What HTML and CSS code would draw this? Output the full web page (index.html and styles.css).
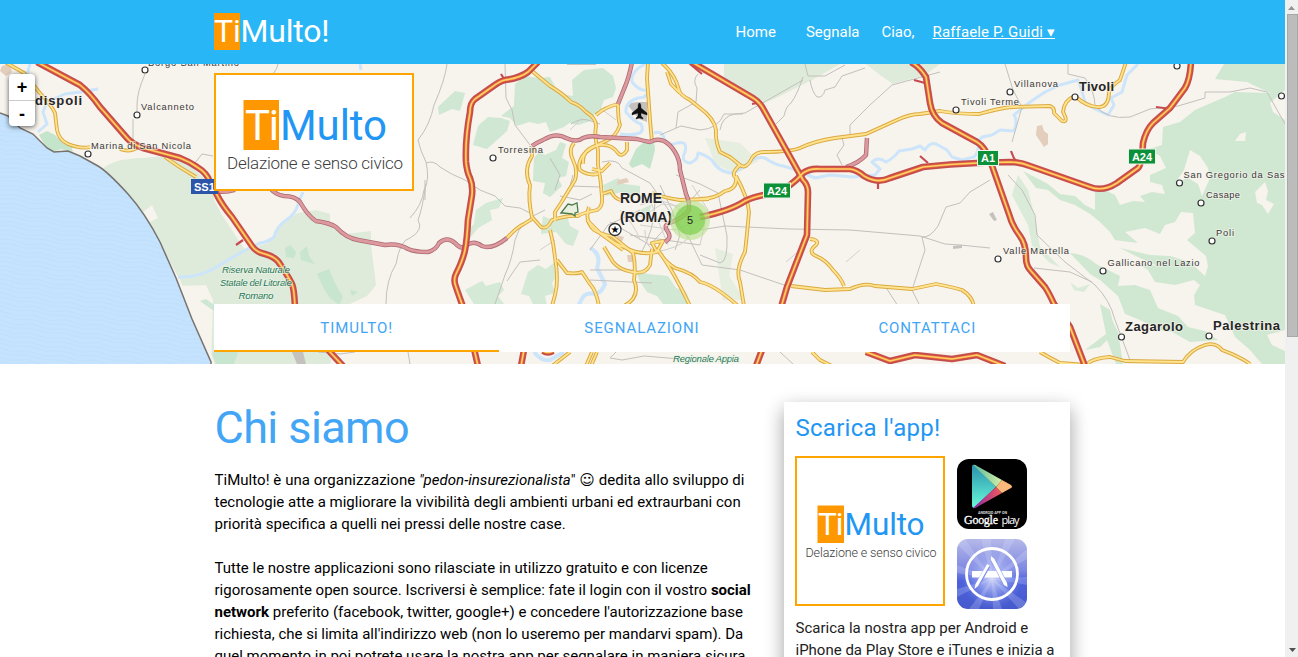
FILE: index.html
```html
<!DOCTYPE html>
<html lang="it">
<head>
<meta charset="utf-8">
<title>TiMulto!</title>
<link rel="stylesheet" href="styles.css">
</head>
<body>
<div class="page">
  <header class="topbar">
    <div class="container topbar-row">
      <a class="brand"><span class="brand-mark">Ti</span>Multo!</a>
      <nav class="menu">
        <a class="menu-home">Home</a><a class="menu-report">Segnala</a><span class="menu-hello">Ciao,</span><a class="user">Raffaele P. Guidi ▾</a>
      </nav>
    </div>
  </header>

  <section class="hero">
    <svg class="map" viewBox="0 64 1285 300" width="1285" height="300">
      <defs>
        <pattern id="waves" width="34" height="9" patternUnits="userSpaceOnUse" patternTransform="rotate(8)">
          <path d="M0 3q8-3 17 0t17 0M0 7q8-2 17 0t17 0" fill="none" stroke="#bbdcf8" stroke-width="1" opacity=".7"/>
        </pattern>
        <g id="motorways">
          <path d="M37 62L80 85Q90 93 100 107L127 138Q132 144 143 148L180 158Q190 162 197 167Q207 173 210 182L217 195Q222 205 232 217L252 246Q256 252 265 254Q276 257 280 264Q288 276 292 284Q294 288 295 306V310L330 352L343 366"/>
          <path d="M538 62L528 72Q520 78 505 80Q500 81 492 87L475 99Q470 103 470 112Q465 140 466 162Q467 172 470 178Q473 185 472 195L468 220Q467 240 465 250Q463 260 456 274Q453 280 456 287Q458 293 462 304L472 340L478 366"/>
          <path d="M690 61L753 98Q760 102 765 112L803 180Q808 185 808 192L807 235L787 287L782 304L762 350L756 366"/>
          <path d="M700 217Q730 211 745 201Q755 196 775 193Q790 188 803 173Q810 168 820 169L850 169Q857 170 864 176Q877 184 890 178L923 167Q950 164 977 163L1010 162Q1020 162 1030 166L1090 187Q1103 192 1117 183L1138 168Q1142 164 1143 143Q1146 130 1153 123L1170 108L1185 88Q1190 80 1191 62"/>
          <path d="M911 62Q920 67 926 77L930 103Q932 116 942 123L977 142Q985 147 990 160L1010 217Q1012 225 1020 236Q1026 244 1026 258Q1026 266 1031 271L1045 287Q1049 293 1054 304L1070 327L1085 366"/>
          <path d="M524 350L521 366M543 351Q548 354 553 351M866 352L890 361L915 355L952 359L977 355L1005 366"/>
        </g>
        <g id="pinks">
          <path d="M214 191Q224 193 235 190M268 186Q275 195 284 196Q295 196 300 202Q308 216 316 221Q330 223 336 227Q346 238 358 240L385 245Q398 243 408 249Q415 252 428 252Q436 250 439 243Q447 236 455 243Q462 251 467 245Q474 240 482 246Q492 250 507 238"/>
          <path d="M532 146Q536 143 543 140Q556 132 566 138Q577 143 583 138Q590 135 600 137L637 139Q644 141 650 142Q656 138 664 141Q670 144 675 152Q680 160 680 170L686 194Q690 203 689 210Q684 218 667 224Q664 227 668 232Q672 238 665 242"/>
          <path d="M632 62Q629 78 624 89L618 104M867 138L866 155Q859 163 846 167"/>
        </g>
        <g id="yellows">
          <path d="M5 63L22 73Q30 81 40 94Q52 105 55 114L58 150Q59 198 66 205" transform="translate(0 -62) scale(1)" class="none"/>
          <path d="M5 62L24 73L39 92Q52 106 55 113L57 130Q59 140 68 144Q80 149 90 147M120 149Q130 153 138 147M165 157Q180 168 196 177"/>
          <path d="M532 71L550 86Q562 93 571 102Q580 105 586 112Q596 118 596 126Q594 136 598 150V165Q601 180 602 197Q603 207 597 210Q582 213 578 216Q568 215 552 220Q547 230 541 227L532 217Q528 200 530 185Q523 170 532 156L533 147"/>
          <path d="M507 238Q517 227 524 224L532 219M596 115Q605 107 618 104Q618 120 620 125Q616 137 606 141Q590 148 584 154Q577 163 580 170Q588 176 598 174M574 143Q568 150 573 160Q578 170 575 180L561 203L555 212V221"/>
          <path d="M550 230Q554 245 555 258Q559 280 555 295L552 306M557 260L567 273Q578 274 582 272L590 284Q596 290 599 306M589 207Q584 220 594 230Q602 235 612 236L633 253Q636 265 634 280Q641 297 624 306"/>
          <path d="M583 164Q582 150 595 146Q610 142 618 153Q622 158 627 150L627 142M602 194L611 191Q615 200 622 200M652 193Q665 198 680 200L709 199M648 62L647 78L650 120L652 142"/>
          <path d="M662 63Q675 74 679 90Q680 95 690 100L700 108Q714 118 716 130Q715 140 720 152L730 157L740 165Q746 170 752 158Q756 152 764 152Q790 152 800 148Q815 141 835 138L866 134L897 120Q910 114 920 114L940 111Q955 114 979 114Q1000 108 1012 107L1050 106Q1055 108 1054 113L1062 121Q1069 123 1063 112Q1064 100 1075 96Q1088 108 1100 107Q1109 106 1109 92Q1111 86 1120 80L1126 62"/>
          <path d="M740 165Q730 174 736 178Q737 189 725 191Q715 199 700 199M736 176Q748 198 749 212Q747 235 745 252Q735 270 740 282L744 306M810 239Q820 240 816 245Q807 252 816 256Q826 260 833 270Q841 278 844 286M791 286L825 290L850 289Q865 282 875 286L912 289L936 284Q952 287 962 290Q972 296 974 306"/>
          <path d="M602 233Q612 243 624 247Q640 256 657 252L652 243L663 241L658 250Q665 262 675 268Q693 273 700 282Q715 285 738 306M660 253Q674 272 690 306M604 247L613 262Q620 270 632 272Q645 275 650 265L652 249M587 220L601 234L623 250"/>
          <path d="M592 169L602 171L610 163M570 352L552 366M592 352L586 366M597 352L591 366M812 352L820 360L832 366M667 72L671 84L680 93"/>
          <path d="M1040 352Q1050 358 1060 363L1086 365Q1092 358 1110 357L1125 361L1183 362Q1190 350 1205 345Q1216 342 1222 350L1232 354Q1245 360 1250 364"/>
        </g>
        <g id="towns">
          <circle cx="145" cy="70" r="3"/><circle cx="137" cy="115" r="3"/><circle cx="88" cy="154" r="3"/><circle cx="493" cy="158" r="3"/><circle cx="956" cy="110" r="3"/><circle cx="1010" cy="92" r="3"/><circle cx="1075" cy="97" r="3"/><circle cx="1177" cy="66" r="3"/><circle cx="1281.500" cy="96" r="3"/><circle cx="1179.500" cy="183" r="3"/><circle cx="1201" cy="203" r="3"/><circle cx="1212" cy="241" r="3"/><circle cx="1103" cy="271" r="3"/><circle cx="998" cy="259" r="3"/><circle cx="1121.500" cy="337" r="3"/><circle cx="1209" cy="336" r="3"/>
        </g>
      </defs>

      <rect class="land" y="64" width="1285" height="300"/>

      <g class="woods">
        <path d="M98 173Q110 158 145 158Q175 152 196 170L214 190V200L222 215L245 250L268 243L282 222L298 213L316 210L330 214V226L345 234L371 231V245L376 285L367 296L350 304L330 364H215L180 280L150 225L125 195Z"/>
        <path d="M724 64H840L812 80L778 97L762 104L745 92L724 85ZM866 64H940L925 75L893 84L880 75Z"/>
        <path d="M715 248l18 6-4 22 16 24h-22zM705 138l35 5 18 18-22 12-20-8z" opacity=".7"/>
      </g>
      <path class="land" d="M180 286L206 285L213 300L211 364L192 330ZM143 212L152 205L158 218L150 222Z"/>
      <g class="hills">
        <path d="M1224 64H1285V90L1270 103L1273 112L1285 120V330L1267 335L1272 345L1285 351V364H1262L1250 350L1235 337L1225 315L1195 305L1194 295L1200 285L1194 280L1175 285L1155 282L1148 270L1135 262L1158 266L1140 258L1120 248L1150 255L1170 256L1190 262L1205 276L1208 266L1206 256L1187 240L1195 233L1193 213L1181 212L1175 222L1165 225L1160 234L1145 228L1125 232L1138 243L1115 240L1110 232L1100 222L1090 214L1075 205L1060 200L1048 190L1036 188L1023 171L1048 184L1060 194L1075 196L1085 205L1095 210V190L1105 190L1115 195L1120 205L1133 201L1145 202L1140 196L1152 192L1165 194L1162 185L1150 182L1150 175L1166 168L1160 156L1150 150L1142 151L1162 145L1163 127L1180 122L1195 110L1225 97L1235 92L1270 93L1247 82L1215 79Z"/>
        <path d="M1070 253Q1085 254 1096 264L1112 272L1120 276L1118 286L1135 285L1150 290L1158 308L1178 316L1188 327L1205 331L1218 340L1190 342L1172 332L1160 330L1140 320L1125 314L1118 296L1100 280L1090 274ZM1100 304L1110 310L1113 322L1118 332L1123 364H1116L1107 340L1100 347L1085 350L1106 334Z"/>
        <path d="M1018 175L1028 190L1035 218L1040 247L1060 267L1050 263L1032 245L1028 225L1012 195ZM1070 282l8 6 12-4-6 8-10-2z" opacity=".75"/>
        <path class="land" d="M1190 150l10 6 8 12 2 10-8 18-4-12-10-6-12 4 8-12zM1235 141l5-7 6-2-1 9zM1255 192l10-10 3 9-2 9 8 4-6 10-6-9-5-2z"/>
      </g>
      <g class="greens">
        <path d="M515 84l10-8 14 2 11-1 9 17 14 2 12 2 4 8 6 7-4 8-13 4-9-2-5 4-14 5-4-10-8 2-9-2-12 4-7-8-9-2 13-10zM572 80l12-10 19-2 10 8 3 12-3 9-9 3-3 8-7 7-10-7-3 2-8-14z" opacity=".8"/>
        <path d="M455 91l10 2-5 18-8-2-13 6-1-8zM478 126l10-9 13 1 9 3-3 10-10 9-10 9-14-4zM534 158l5-6 6 3 11-5 4-8 6 2-4 14 7 4-3 14-8 2 4 8-12 11-7-4 2-10-12-2z" opacity=".8"/>
        <path d="M636 149l8-7 10-1 1 9-5 19-8-5-10 4-3-4z"/>
        <path d="M476 210l10-7 17-5-4 10-9 2 2 10-14 8-8 10-6-4 10-10zM543 216l10 4 14-4 3 10 9 5-6 15-7-2-10-12-15 2zM528 272l10-7 8 4 10-8 3 12-7 10 3 10-10 3 2 10h-13l-5-10-8-2zM465 290l17-9 4 5 14-4 4 8-6 6 6 8h-30z" opacity=".7"/>
        <path d="M636 270l12 4 20 2 8 12 10 4 5 12h-28l-6-8-10-4-8-12zM603 185l15-7 6 6 16 2v8l-10 3-8-5-16 4zM640 210l12-6-4 12z" opacity=".75"/>
        <path d="M285 248l5-3 6 7-2 6-8-1zM300 252l7-6 2 10 6 8-8-2-6-2zM317 274l12-5 6 14 8 14-4 8-10-8-6-10zM350 290l8 2-6 4zM200 301l6-2 8 6v6zM212 353l12-6 8-2 6 8-4 11h-18z" opacity=".85"/>
        <path d="M39 135l8-4 8 4 8 8 8 2 2 7-12-3-10 4-6-8z"/>
      </g>
      <g class="urban">
        <path d="M627 104l10-2h10v20l-8-3-9-11zM567 63h29v2h-29zM292 352h11l3 12h-9zM989 214l4-2 4 8-3 1zM953 246l9-1v3l-9 1z"/>
        <path class="sand" d="M1037 126l5-1 2 6 4 3v10l-4 3-8-12zM618 180l9-2 2 4-12 3zM2 66l8-2 2 8-6 4-6-5zM627 255h6v7h-5zM616 235l8 2-3 7z"/>
      </g>

      <path class="sea" d="M0 113L8 116L20 128L33 134L47 148L54 152L68 151L80 156L98 166Q108 172 128 194Q145 213 160 242L176 278L192 319L211 362V366H0Z"/>
      <path class="waves" d="M0 113L8 116L20 128L33 134L47 148L54 152L68 151L80 156L98 166Q108 172 128 194Q145 213 160 242L176 278L192 319L211 362V366H0Z"/>
      <path class="shore" d="M0 113L8 116L20 128L33 134L47 148L54 152L68 151L80 156L98 166Q108 172 128 194Q145 213 160 242L176 278L192 319L211 362V366"/>

      <g class="rivers">
        <path d="M30 64L27 75M98 89L80 92L65 94L47 102L43 112L47 124L38 132M360 64L361 70M303 192L298 204Q296 214 285 221Q276 228 274 237Q268 242 260 243Q240 252 220 265Q200 278 178 277"/>
        <path d="M645 64Q630 72 632 82Q640 92 648 90Q648 98 638 98Q625 102 626 112Q634 122 641 124Q644 130 640 133Q630 136 620 134M654 133Q662 130 664 138Q668 147 677 143Q688 140 685 152Q680 162 690 163Q698 160 698 153Q704 154 712 160Q718 172 732 173Q742 170 750 161Q758 156 765 158Q775 165 783 166Q792 168 803 173L815 178L830 175L853 177L875 175L880 169L872 162Q878 156 886 162Q894 158 899 151L912 149L920 146L925 150Q930 142 936 144L947 150L952 157L962 160L974 157Q980 150 978 142L982 137L992 135L1000 130L1014 131Q1018 120 1014 115L1030 102L1045 92L1060 85L1078 80Q1082 90 1085 102L1095 109L1108 115L1114 105L1111 98L1122 92L1127 75L1138 64"/>
        <path d="M590 248Q602 254 597 268L605 284Q602 292 596 294Q586 292 583 297L578 306M534 352Q542 362 550 360L564 352" class="wide"/>
      </g>
      <g class="lanes">
        <path d="M145 74Q137 92 137 105V112M133 119V144M278 64Q276 74 265 80M195 163L202 154L213 156"/>
        <path d="M447 64Q445 80 434 105Q430 125 418 140Q420 150 426 162Q430 180 424 190Q422 205 410 218M426 163Q434 160 440 167Q452 175 465 180L480 190L495 196L505 206L520 208L530 213M505 64L506 98L512 110L515 125L530 145M425 180V200M426 184Q422 210 418 220Q424 230 410 238Q400 240 396 264Q386 280 386 304"/>
        <path d="M550 158L560 175L555 190M571 124Q580 118 588 120L600 124M600 187L570 186L573 175M660 135L681 126L700 130Q718 129 724 114H743M698 74Q692 80 697 88L696 102L678 112L676 128M602 162Q618 158 622 168L650 183L665 205L690 240L702 265L740 270L790 287M676 175L700 184L718 193L727 236Q728 262 720 263L700 255M660 185L672 210L680 235L675 250"/>
        <path d="M700 230L725 226L790 229L850 230L920 236L945 244L960 245L990 248M805 64L808 76L825 76L845 65M803 77Q797 95 791 103Q786 106 784 116L776 124M810 80Q812 92 817 97Q823 98 825 90L835 87L842 76L865 68M720 130Q722 116 735 114L745 113L803 80M850 134V125L870 105L892 85L940 72M842 138L844 145L837 155L842 165M990 180L970 192L960 203L946 207L938 226Q930 238 922 237L925 250L912 290L920 306M885 286L898 306"/>
        <path d="M1005 64L1013 90L1022 107L1012 142M1068 64L1068 74L1085 78Q1095 92 1095 106Q1108 120 1130 117L1150 109L1178 106L1205 98V92L1230 92L1250 88L1267 92L1285 124M1008 175L1022 190L1035 215L1037 235L1065 262L1095 285Q1110 300 1115 320L1130 360M1034 268L1070 272L1092 282M560 196L580 200L592 194M545 210Q520 220 515 240Q512 260 505 275L495 304M590 250L608 225L640 210M590 270H634M590 280L652 283M630 235L700 245M655 200Q655 230 640 255M610 222L650 245L700 190M540 260L520 262L507 281M616 352L610 358L622 360L644 356L680 359M780 352L793 364M318 352L340 354L355 352M408 352L410 364"/>
        <path class="pale" d="M640 205Q665 195 680 210T690 235T665 250T645 230M635 215L680 225M650 200L668 245M620 210Q635 225 640 240M700 220L675 230L640 225M692 185L708 210L700 245M645 215L662 204L680 206M570 130L582 118M616 120L600 108M555 240L540 250M800 250L786 262M860 250L846 262"/>
      </g>

      <use href="#yellows" class="yellow-case"/><use href="#yellows" class="yellow-fill"/>
      <use href="#pinks" class="pink-case"/><use href="#pinks" class="pink-fill"/>
      <path class="ramp" d="M236 245L243 240M1011 151Q1013 158 1018 164M1156 107L1171 109M914 80L925 83M920 156L928 163M878 181V189M702 74L690 64M752 104L762 102M501 74L506 82"/>
      <use href="#motorways" class="motor-case"/><use href="#motorways" class="motor-mid"/><use href="#motorways" class="motor-core"/>

      <path class="vatican" d="M561 213L568 204L572 205L577 203L578 212L575 213V216L572 214L563 213Z"/>
      <path class="plane" d="M639.500 103Q641 103 641 108L647 113V115L641 113V116L643 118V119L639.500 118L636 119V118L638 116V113L632 115V113L638 108Q638 103 639.500 103Z"/>
      <g class="shields">
        <rect class="blue" x="191" y="179" width="27" height="15"/><text x="194" y="191">SS1</text>
        <rect x="763.500" y="183" width="27" height="15"/><text x="777" y="195" class="mid">A24</text>
        <rect x="977.500" y="150.500" width="21" height="15"/><text x="988" y="162" class="mid">A1</text>
        <rect x="1128.500" y="149" width="27" height="15"/><text x="1142" y="161" class="mid">A24</text>
      </g>
      <use href="#towns" class="town-dots"/>
      <circle class="capital" cx="615" cy="229.500" r="6"/><text class="star" x="615" y="233">★</text>
      <g class="small-labels">
        <text x="148" y="66" textLength="91">Borgo San Martino</text><text x="141" y="110" textLength="53">Valcanneto</text><text x="91" y="149" textLength="100">Marina di San Nicola</text><text x="498" y="153" textLength="45">Torresina</text><text x="961" y="105" textLength="58">Tivoli Terme</text><text x="1014" y="87" textLength="44">Villanova</text><text x="1183.500" y="178" textLength="101">San Gregorio da Sas</text><text x="1206" y="198" textLength="34">Casape</text><text x="1216" y="236" textLength="18">Poli</text><text x="1107.500" y="266" textLength="92">Gallicano nel Lazio</text><text x="1003" y="254" textLength="66">Valle Martella</text>
      </g>
      <g class="big-labels">
        <text x="27" y="105" textLength="55">adispoli</text><text x="1079" y="91" textLength="35">Tivoli</text><text x="1125" y="331" textLength="58">Zagarolo</text><text x="1213" y="330" textLength="67">Palestrina</text>
        <text class="rome" x="620" y="203" textLength="42">ROME</text><text class="rome" x="620" y="222" textLength="52">(ROMA)</text>
      </g>
      <g class="park-labels">
        <text x="256" y="273" textLength="68">Riserva Naturale</text><text x="256" y="286" textLength="72">Statale del Litorale</text><text x="256" y="299" textLength="35">Romano</text><text x="706" y="361.500" textLength="66">Regionale Appia</text>
      </g>
      <circle class="cluster-ring" cx="690" cy="220" r="20"/><circle class="cluster" cx="690" cy="220" r="15"/><text class="cluster-num" x="690" y="224">5</text>
    </svg>
    <div class="zoomer"><span>+</span><span>-</span></div>
    <div class="container hero-content">
      <div class="logo logo-wide">
        <svg viewBox="0 0 196 114" width="196" height="114">
          <rect class="mark" x="27.500" y="25" width="35.500" height="50"/>
          <text class="mark-text" x="29" y="65" textLength="34" font-size="42">Ti</text>
          <text class="name" x="64" y="65" textLength="107" font-size="42">Multo</text>
          <text class="tagline" x="11" y="94" textLength="176" font-size="17">Delazione e senso civico</text>
        </svg>
      </div>
      <nav class="tabs"><a class="tab active">TIMULTO!</a><a class="tab">SEGNALAZIONI</a><a class="tab">CONTATTACI</a></nav>
    </div>
  </section>

  <main class="container content">
    <article class="about">
      <h1>Chi siamo</h1>
      <p><span class="lead">TiMulto! è una organizzazione <i>"pedon-insurezionalista</i>" <span class="smile">☺</span> dedita allo sviluppo di</span><br>tecnologie atte a migliorare la vivibilità degli ambienti urbani ed extraurbani con<br>priorità specifica a quelli nei pressi delle nostre case.</p>
      <p>Tutte le nostre applicazioni sono rilasciate in utilizzo gratuito e con licenze<br>rigorosamente open source. Iscriversi è semplice: fate il login con il vostro <b>social<br>network</b> preferito (facebook, twitter, google+) e concedere l'autorizzazione base<br>richiesta, che si limita all'indirizzo web (non lo useremo per mandarvi spam). Da<br>quel momento in poi potrete usare la nostra app per segnalare in maniera sicura</p>
    </article>
    <aside class="card">
      <h2>Scarica l'app!</h2>
      <div class="downloads">
        <div class="logo logo-square">
          <svg viewBox="0 0 146 146" width="146" height="146">
            <rect class="mark" x="20.500" y="47.500" width="26.500" height="37.500"/>
            <text class="mark-text" x="21" y="77" textLength="25.500" font-size="31.500">Ti</text>
            <text class="name" x="47.500" y="77" textLength="80" font-size="31.500">Multo</text>
            <text class="tagline" x="8.500" y="98.500" textLength="131" font-size="12.500">Delazione e senso civico</text>
          </svg>
        </div>
        <div class="stores">
          <svg viewBox="0 0 70 70" width="70" height="70">
            <defs>
              <linearGradient id="pl" x2="0" y2="1"><stop stop-color="#2a91ae"/><stop offset="1" stop-color="#69fbd8"/></linearGradient>
              <linearGradient id="pt"><stop stop-color="#59b99b"/><stop offset="1" stop-color="#d5efa7"/></linearGradient>
              <linearGradient id="pb"><stop stop-color="#8926a5"/><stop offset="1" stop-color="#f45b5b"/></linearGradient>
            </defs>
            <rect width="70" height="70" rx="12"/>
            <path fill="url(#pl)" d="M15 8Q15 5 17 6L39 28L17 49Q15 49 15 46Z"/>
            <path fill="url(#pt)" d="M16 6Q18 5 20 7L45 21L39 28Z"/>
            <path fill="url(#pb)" d="M16 49L39 28L45 34L20 48Q18 50 16 49Z"/>
            <path fill="#fbb87b" d="M45 21L54 26Q56 28 54 29L45 34L39 28Z"/>
            <text class="play-small" x="35.500" y="54.500" textLength="29">ANDROID APP ON</text>
            <text class="play-google" x="7" y="64.500" textLength="34">Google</text><text class="play-word" x="44.500" y="64.500" textLength="18">play</text>
          </svg>
          <svg viewBox="0 0 70 70" width="70" height="70">
            <defs>
              <linearGradient id="sky" x2="0" y2="1"><stop stop-color="#b4b8e8"/><stop offset=".45" stop-color="#7c86e2"/><stop offset=".6" stop-color="#4d61dc"/><stop offset="1" stop-color="#4659cc"/></linearGradient>
              <radialGradient id="glow"><stop stop-color="#fff" stop-opacity=".75"/><stop offset="1" stop-color="#9db1ff" stop-opacity="0"/></radialGradient>
              <clipPath id="tile"><rect width="70" height="70" rx="11"/></clipPath>
            </defs>
            <g clip-path="url(#tile)">
              <rect width="70" height="70" fill="url(#sky)"/>
              <path class="rays" d="M35 40L0 5L8 0ZM35 40L24 0H34ZM35 40L48 0H58ZM35 40L70 10V20ZM35 40L70 38V46ZM35 40L70 64L62 70ZM35 40L45 70H36ZM35 40L22 70H12ZM35 40L0 58V50ZM35 40L0 34V26Z"/>
              <circle cx="35" cy="40" r="30" fill="url(#glow)"/>
            </g>
            <circle cx="35" cy="35" r="25.500" fill="none" stroke="#fff" stroke-width="2.800"/>
            <path fill="#fff" d="M15 32H55V38.500H15Z"/>
            <path fill="none" stroke="#7f8eea" stroke-width="4.500" d="M31 27L20 47M36 21L48 44"/>
            <path fill="#fff" d="M30 25L32.500 26.500L21 47L17.500 50L18.500 45ZM34 17L37.500 20L50 44L50.500 48L47 46L34 21Z"/>
          </svg>
        </div>
      </div>
      <p class="card-text">Scarica la nostra app per Android e<br>iPhone da Play Store e iTunes e inizia a</p>
    </aside>
  </main>
</div>
<div class="scrollbar">
  <svg class="arrow" viewBox="0 0 13 14" width="13" height="14"><path d="M3 10H10L6.500 6Z" fill="#949494"/></svg>
  <div class="thumb"></div>
  <svg class="arrow" viewBox="0 0 13 14" width="13" height="14"><path d="M4 5H11L7.500 9Z" fill="#505050"/></svg>
</div>
</body>
</html>
```
FILE: styles.css
```css
* { box-sizing: border-box; }
body {
  margin: 0;
  display: flex;
  height: 657px;
  overflow: hidden;
  background: #fff;
  color: #000;
  font: 15px/22px Roboto, "Liberation Sans", sans-serif;
}
.page { width: 1285px; height: 657px; overflow: hidden; }
.container { width: 856px; margin-left: 214px; }

.topbar { height: 64px; background: #29b6f6; color: #fff; }
.topbar-row { display: flex; justify-content: space-between; align-items: center; height: 64px; }
.brand { font-size: 32px; line-height: 37px; margin-top: -1px; display: flex; letter-spacing: -.2px; }
.brand-mark { background: #ff9800; }
.menu { display: flex; padding-right: 15px; }
.menu-home { margin-right: 30px; }
.menu-report { margin-right: 22px; }
.menu-hello { margin-right: 18px; }
.user { text-decoration: underline; letter-spacing: .13px; }

.hero { position: relative; height: 300px; }
.map { display: block; font-family: "Liberation Sans", Arial, sans-serif; }
.land { fill: #f7f3ed; }
.woods { fill: #deebda; }
.hills { fill: #d0e8d2; }
.greens { fill: #c4e4cc; }
.urban { fill: #c5c1be; }
.sand { fill: #e3cdbb; }
.sea { fill: #c5e3fe; }
.waves { fill: url(#waves); }
.shore { fill: none; stroke: #77736f; stroke-width: 1.5; }
.rivers { fill: none; stroke: #cce5fb; stroke-width: 3; stroke-linejoin: round; }
.rivers .wide { stroke-width: 4; }
.lanes { fill: none; stroke: #c3c0bd; stroke-width: 1; stroke-linejoin: round; }
.lanes .pale { stroke: #d3d0cc; }
.none { display: none; }
.yellow-case, .yellow-fill, .pink-case, .pink-fill, .motor-case, .motor-mid, .motor-core { fill: none; stroke-linejoin: round; }
.yellow-case { stroke: #dba941; stroke-width: 3.8; }
.yellow-fill { stroke: #ffe38e; stroke-width: 1.8; }
.pink-case { stroke: #ad6872; stroke-width: 4.4; }
.pink-fill { stroke: #dc9a9f; stroke-width: 2.8; }
.ramp { fill: none; stroke: #c74a51; stroke-width: 2.2; }
.motor-case { stroke: #c44c4c; stroke-width: 6.6; }
.motor-mid { stroke: #e8693c; stroke-width: 3.2; }
.motor-core { stroke: #ffd262; stroke-width: 1.6; }
.vatican { fill: #e9f0e0; stroke: #4c7a4a; stroke-width: 1.3; }
.plane { fill: #111; stroke: #111; stroke-width: .4; }
.shields rect { fill: #0c9138; stroke: #e9f5ea; stroke-width: 1; }
.shields .blue { fill: #2c54a8; stroke: none; }
.shields text { fill: #fff; font-weight: bold; font-size: 11px; }
.shields .mid { text-anchor: middle; }
.town-dots { fill: #fff; stroke: #333; stroke-width: 1.2; }
.capital { fill: #fff; stroke: #333; stroke-width: 1.4; }
.star { font: 10px "DejaVu Sans", sans-serif; text-anchor: middle; }
.small-labels { font-size: 9.3px; fill: #3a3a3a; paint-order: stroke; stroke: #f7f3ed99; stroke-width: 2; }
.big-labels { font-size: 13px; font-weight: bold; fill: #252525; paint-order: stroke; stroke: #f7f3ed99; stroke-width: 2; }
.rome { font-size: 14px; }
.park-labels { font-size: 9.8px; font-style: italic; fill: #1f7558; text-anchor: middle; paint-order: stroke; stroke: #eaf3e5aa; stroke-width: 2; }
.cluster-ring { fill: #b5e28c; fill-opacity: .6; }
.cluster { fill: #6ecc39; fill-opacity: .6; }
.cluster-num { font-size: 11px; text-anchor: middle; fill: #222; }

.zoomer {
  position: absolute;
  left: 9px;
  top: 10px;
  width: 26px;
  border-radius: 4px;
  background: #fff;
  box-shadow: 0 1px 5px rgba(0, 0, 0, .65);
}
.zoomer span {
  display: block;
  height: 26px;
  font: bold 18px/26px "Liberation Sans", Arial, sans-serif;
  text-align: center;
}
.zoomer span + span { border-top: 1px solid #ccc; line-height: 27px; }

.hero-content {
  position: absolute;
  inset: 0 auto auto 0;
  height: 288px;
  padding-top: 9px;
  display: flex;
  flex-direction: column;
  justify-content: space-between;
}
.logo { border: 2px solid orange; background: #fff; }
.logo svg { display: block; font-family: Roboto, sans-serif; }
.logo-wide { width: 200px; height: 118px; }
.logo-square { width: 150px; height: 150px; }
.mark { fill: #ff9800; }
.mark-text { fill: #fff; }
.name { fill: #2196f3; }
.tagline { fill: #3c3c3c; font-weight: 300; }
.tabs { display: grid; grid-template-columns: repeat(3, 1fr); height: 48px; background: #fff; }
.tab { color: #42a5f5; text-align: center; letter-spacing: .9px; line-height: 48px; height: 48px; }
.active { border-bottom: 2px solid orange; letter-spacing: 1px; }

.content { display: flex; justify-content: space-between; align-items: flex-start; padding-top: 38px; }
.about { width: 556px; padding-left: .5px; }
h1 { margin: 0 0 16px; font-size: 45px; font-weight: 400; line-height: 51px; letter-spacing: -.6px; color: #42a5f5; }
.about p { margin: 0 0 22px; white-space: nowrap; }
.lead { letter-spacing: .04px; }
.smile { font-family: "DejaVu Sans", sans-serif; line-height: 1; }
.card {
  width: 286px;
  height: 400px;
  padding: 10px 11.5px;
  background: #fff;
  box-shadow: 0 8px 17px 0 rgba(0, 0, 0, .2), 0 6px 20px 0 rgba(0, 0, 0, .19);
}
h2 { margin: 0 0 12px; font-size: 24px; font-weight: 400; line-height: 32px; letter-spacing: .28px; color: #2196f3; }
.downloads { display: flex; gap: 12px; margin-left: -.5px; }
.stores { display: flex; flex-direction: column; gap: 10px; padding-top: 3px; }
.stores svg { display: block; }
.play-small { font: bold 3.6px Roboto, sans-serif; fill: #ddd; text-anchor: middle; }
.play-google { font: 12px "Liberation Serif", serif; fill: #fff; stroke: #fff; stroke-width: .3; }
.play-word { font: 11px "Open Sans", sans-serif; fill: #fff; }
.rays { fill: #dfe4ff; opacity: .22; }
.card-text { margin: 8px 0 0; color: #212121; white-space: nowrap; }

.scrollbar { width: 13px; height: 657px; background: #f0f0f0; display: flex; flex-direction: column; }
.arrow { display: block; flex: none; }
.thumb { height: 323px; margin: 0 0 306px 2px; background: #bcbcbc; border: 1px solid #a8a8a8; }
```
